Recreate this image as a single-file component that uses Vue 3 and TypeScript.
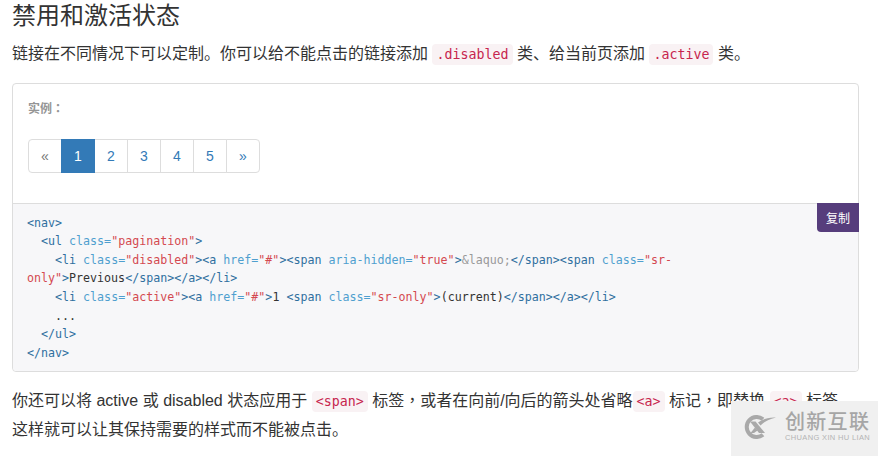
<script setup lang="ts">
const pages = ['«', '1', '2', '3', '4', '5', '»']
</script>

<template>
  <main class="page">
    <h2 class="title">禁用和激活状态</h2>
    <p class="para first">链接在不同情况下可以定制。你可以给不能点击的链接添加 <code>.disabled</code> 类、给当前页添加 <code>.active</code> 类。</p>

    <section class="example">
      <div class="demo">
        <div class="label">实例<span class="tc">：</span></div>
        <ul class="pagination">
          <li v-for="(p, i) in pages" :key="p" :class="{ active: p === '1', muted: i === 0 }">{{ p }}</li>
        </ul>
      </div>
      <div class="code-wrap">
        <button class="copy">复制</button>
        <pre class="code"><span class="t">&lt;nav&gt;</span>
  <span class="t">&lt;ul</span> <span class="a">class=</span><span class="s">"pagination"</span><span class="t">&gt;</span>
    <span class="t">&lt;li</span> <span class="a">class=</span><span class="s">"disabled"</span><span class="t">&gt;&lt;a</span> <span class="a">href=</span><span class="s">"#"</span><span class="t">&gt;&lt;span</span> <span class="a">aria-hidden=</span><span class="s">"true"</span><span class="t">&gt;</span><span class="e">&amp;laquo;</span><span class="t">&lt;/span&gt;&lt;span</span> <span class="a">class=</span><span class="s">"sr-
only"</span><span class="t">&gt;</span>Previous<span class="t">&lt;/span&gt;&lt;/a&gt;&lt;/li&gt;</span>
    <span class="t">&lt;li</span> <span class="a">class=</span><span class="s">"active"</span><span class="t">&gt;&lt;a</span> <span class="a">href=</span><span class="s">"#"</span><span class="t">&gt;</span>1 <span class="t">&lt;span</span> <span class="a">class=</span><span class="s">"sr-only"</span><span class="t">&gt;</span>(current)<span class="t">&lt;/span&gt;&lt;/a&gt;&lt;/li&gt;</span>
    ...
  <span class="t">&lt;/ul&gt;</span>
<span class="t">&lt;/nav&gt;</span></pre>
      </div>
    </section>

    <p class="para last">你还可以将 active 或 disabled 状态应用于 <code>&lt;span&gt;</code> 标签<span class="tc">，</span>或者在向前/向后的箭头处省略<code>&lt;a&gt;</code> 标记<span class="tc">，</span>即替换 <code>&lt;a&gt;</code> 标签<br />这样就可以让其保持需要的样式而不能被点击。</p>

    <aside class="mark">
      <svg class="logo" viewBox="0 0 33 24" width="33" height="24" aria-hidden="true">
        <path d="M20 4.2A10 10 0 1 0 20 19.8" fill="none" stroke="#a9a9a9" stroke-width="4" />
        <path d="M7 6.5 L12.5 6.5 L22 18 L16 18 Z" fill="#a9a9a9" />
        <path d="M33 2.5 C26 4 21 7 17.5 10.5 L15 7.5 C20 4 26 2 33 2.5 Z" fill="#a9a9a9" />
        <path d="M12 12.5 L14.5 15.5 L11 18 L7.5 18 Z" fill="#a9a9a9" />
      </svg>
      <div class="brand">
        <div class="cn">创新互联</div>
        <div class="en">CHUANG XIN HU LIAN</div>
      </div>
    </aside>
  </main>
</template>

<style>
html, body { margin: 0; padding: 0; background: #fff; overflow: hidden; }
</style>

<style scoped>
.page {
  position: relative;
  height: 456px;
  overflow: hidden;
  box-sizing: border-box;
  padding: 1px 19px 0 12px;
  color: #333;
  font-family: "Liberation Sans", "Noto Sans CJK SC", sans-serif;
  font-size: 16px;
}
.title {
  margin: 0;
  font-size: 24px;
  font-weight: 400;
  line-height: 30px;
}
.para {
  margin: 0;
  line-height: 28.8px;
}
.first { margin-top: 9px; }
.last { margin-top: 15px; }
.tc { font-family: "Noto Sans CJK TC", sans-serif; line-height: 1; }
code {
  font-family: "DejaVu Sans Mono", monospace;
  font-size: 13.3px;
  line-height: 1;
  padding: 3px 4px;
  border-radius: 4px;
  color: #c7254e;
  background: #f9f2f4;
}
.example {
  margin-top: 14px;
  border: 1px solid #ddd;
  border-radius: 4px;
}
.demo {
  height: 119px;
  box-sizing: border-box;
  padding: 16px 15px 0;
}
.label {
  font-size: 12px;
  font-weight: 700;
  color: #959595;
  line-height: 18px;
}
.pagination {
  display: inline-flex;
  list-style: none;
  margin: 21px 0 0;
  padding: 0;
  font-size: 14px;
}
.pagination li {
  width: 34px;
  height: 34px;
  box-sizing: border-box;
  margin-left: -1px;
  display: flex;
  align-items: center;
  justify-content: center;
  border: 1px solid #ddd;
  color: #337ab7;
  background: #fff;
}
.pagination li:first-child { margin-left: 0; border-radius: 4px 0 0 4px; }
.pagination li:last-child { border-radius: 0 4px 4px 0; }
.pagination li.muted { color: #777; }
.pagination li.active {
  color: #fff;
  background: #337ab7;
  border-color: #337ab7;
  position: relative;
}
.code-wrap {
  position: relative;
  border-top: 1px solid #ddd;
  background: #f7f7f9;
  border-radius: 0 0 4px 4px;
}
.code {
  margin: 0;
  padding: 10px 14px 9px;
  font-family: "DejaVu Sans Mono", monospace;
  font-size: 11.65px;
  line-height: 18.57px;
  color: #333;
  white-space: pre-wrap;
}
.t { color: #2f6f9f; }
.a { color: #4f9fcf; }
.s { color: #d44950; }
.e { color: #999; }
.copy {
  position: absolute;
  top: -1px;
  right: -1px;
  width: 42px;
  height: 29px;
  padding: 0;
  border: 0;
  border-radius: 0 0 0 4px;
  background: #563d7c;
  color: #fff;
  font-family: inherit;
  font-size: 12px;
}
.mark {
  position: absolute;
  right: 0;
  bottom: 0;
  width: 147px;
  height: 55px;
  box-sizing: border-box;
  display: flex;
  align-items: center;
  gap: 9px;
  padding: 0 0 4px 12px;
  background: #f0f0f0;
  color: #a9a9a9;
}
.brand { line-height: 1; }
.cn {
  font-size: 20px;
  letter-spacing: 1.3px;
  font-weight: 500;
  color: #a6a6a6;
  white-space: nowrap;
}
.en {
  margin-top: 2px;
  font-size: 7.5px;
  letter-spacing: 0.35px;
  white-space: nowrap;
  color: #b4b4b4;
}
</style>
